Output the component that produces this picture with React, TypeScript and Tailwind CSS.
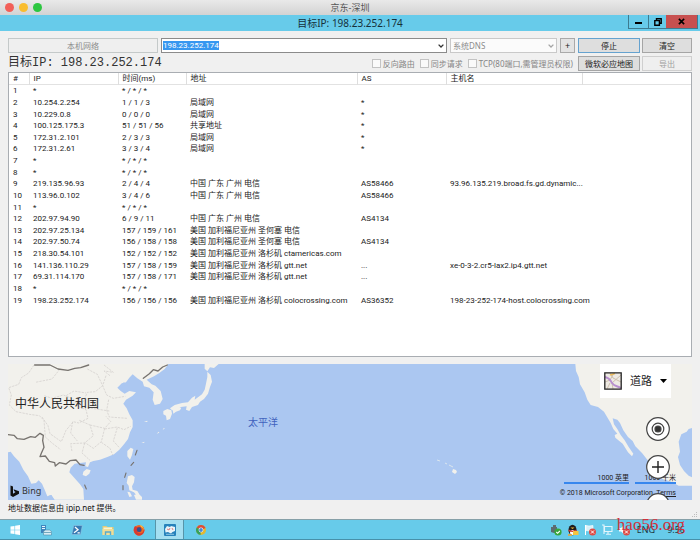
import type { ReactNode } from 'react';

type Hop = { ip: string; time: string; addr?: string; as?: string; host?: string };

const hops: Hop[] = [
  { ip: '*', time: '* / * / *' },
  { ip: '10.254.2.254', time: '1 / 1 / 3', addr: '局域网', as: '*' },
  { ip: '10.229.0.8', time: '0 / 0 / 0', addr: '局域网', as: '*' },
  { ip: '100.125.175.3', time: '51 / 51 / 56', addr: '共享地址', as: '*' },
  { ip: '172.31.2.101', time: '2 / 3 / 3', addr: '局域网', as: '*' },
  { ip: '172.31.2.61', time: '3 / 3 / 4', addr: '局域网', as: '*' },
  { ip: '*', time: '* / * / *' },
  { ip: '*', time: '* / * / *' },
  { ip: '219.135.96.93', time: '2 / 4 / 4', addr: '中国 广东 广州 电信', as: 'AS58466', host: '93.96.135.219.broad.fs.gd.dynamic...' },
  { ip: '113.96.0.102', time: '3 / 4 / 6', addr: '中国 广东 广州 电信', as: 'AS58466' },
  { ip: '*', time: '* / * / *' },
  { ip: '202.97.94.90', time: '6 / 9 / 11', addr: '中国 广东 广州 电信', as: 'AS4134' },
  { ip: '202.97.25.134', time: '157 / 159 / 161', addr: '美国 加利福尼亚州 圣何塞 电信' },
  { ip: '202.97.50.74', time: '156 / 158 / 158', addr: '美国 加利福尼亚州 圣何塞 电信', as: 'AS4134' },
  { ip: '218.30.54.101', time: '152 / 152 / 152', addr: '美国 加利福尼亚州 洛杉矶 ctamericas.com' },
  { ip: '141.136.110.29', time: '157 / 158 / 159', addr: '美国 加利福尼亚州 洛杉矶 gtt.net', as: '...', host: 'xe-0-3-2.cr5-lax2.ip4.gtt.net' },
  { ip: '69.31.114.170', time: '157 / 158 / 171', addr: '美国 加利福尼亚州 洛杉矶 gtt.net', as: '...' },
  { ip: '*', time: '* / * / *' },
  { ip: '198.23.252.174', time: '156 / 156 / 156', addr: '美国 加利福尼亚州 洛杉矶 colocrossing.com', as: 'AS36352', host: '198-23-252-174-host.colocrossing.com' },
];

const columns = ['#', 'IP', '时间(ms)', '地址', 'AS', '主机名'];

function TitleBars() {
  return (
    <header>
      <div className="relative flex h-[15px] items-center justify-center bg-linear-to-b from-[#e9e9e9] to-[#d3d3d3] text-[9px] text-[#555]">
        <div className="absolute left-[5px] flex gap-[5px]">
          <span className="size-[9px] rounded-full bg-[#f25f58]" />
          <span className="size-[9px] rounded-full bg-[#f9bd2f]" />
          <span className="size-[9px] rounded-full bg-[#2dc640]" />
        </div>
        京东-深圳
      </div>
      <div className="relative flex h-4 items-center justify-center bg-[#67cbea] text-[10px] text-[#16303a]">
        目标IP: 198.23.252.174
        <div className="absolute top-0 right-[2px] flex h-[14px] border border-t-0 border-[#3d7b90]">
          <button aria-label="最小化" className="flex w-[19px] items-end justify-center pb-1">
            <span className="h-[2px] w-[7px] bg-black" />
          </button>
          <button aria-label="还原" className="flex w-[18px] items-center justify-center border-l border-[#3d7b90]">
            <svg viewBox="0 0 8 8" className="size-2" fill="none" stroke="#000" strokeWidth="1.4">
              <path d="M2.5 2V.8h4.7v4.4H6M.8 2.6h4.6v4.6H.8z" />
            </svg>
          </button>
          <button aria-label="关闭" className="flex w-[31px] items-center justify-center bg-[#c75050]">
            <svg viewBox="0 0 8 8" className="size-[7px]" stroke="#000" strokeWidth="1.9">
              <path d="M1 1l6 6M7 1L1 7" />
            </svg>
          </button>
        </div>
      </div>
    </header>
  );
}

function Chevron({ className }: { className: string }) {
  return (
    <svg viewBox="0 0 6 4" className={className} fill="none" strokeWidth="1.3">
      <path d="M.6.6L3 3 5.400.6" />
    </svg>
  );
}

function Check({ children }: { children: ReactNode }) {
  return (
    <label className="flex items-center gap-[2px] whitespace-nowrap text-[#858585]">
      <input type="checkbox" className="size-[9px] appearance-none border border-[#c3c3c3] bg-[#fafafa]" />
      {children}
    </label>
  );
}

function Toolbar() {
  return (
    <div className="text-[8px]">
      <div className="flex h-[15px] gap-[3px]">
        <button disabled className="w-[150px] border border-[#c4c9c9] bg-[#efefef] text-[#8c8c8c]">本机网络</button>
        <div className="flex flex-1 items-center justify-between border border-[#8b8b8b] bg-white pr-[2px] pl-px">
          <input aria-label="目标IP" defaultValue="198.23.252.174" className="h-[9px] w-[56px] bg-[#3797f0] font-[Roboto,sans-serif] leading-[9px] text-white outline-none" />
          <button aria-label="历史">
            <Chevron className="h-1 w-[6px] stroke-[#333]" />
          </button>
        </div>
        <div className="relative w-[107px]">
          <select disabled aria-label="DNS" className="h-full w-full appearance-none border border-[#c9c9c9] bg-[#fbfbfb] px-[2px] text-[#8c8c8c] opacity-100">
            <option>系统DNS</option>
          </select>
          <Chevron className="pointer-events-none absolute top-[6px] right-[3px] h-1 w-[6px] stroke-[#a5a5a5]" />
        </div>
        <button aria-label="添加" className="flex w-[15px] items-center justify-center border border-[#a9a9a9] bg-[#e3e3e3] text-[9px] leading-none">+</button>
        <div className="flex gap-[2px]">
          <button className="w-[62px] border border-[#65a2cf] bg-[#dedede]">停止</button>
          <button className="w-[50px] border border-[#a5a5a5] bg-[#dedede]">清空</button>
        </div>
      </div>
      <div className="mt-[3px] flex h-[15px] items-center gap-[5px]">
        <h1 className="mr-auto font-['Liberation_Mono','Noto_Sans_CJK_SC',monospace] text-[12px] leading-[15px] whitespace-pre text-[#333]">目标IP: 198.23.252.174</h1>
        <Check>反向路由</Check>
        <Check>同步请求</Check>
        <Check>TCP(80端口,需管理员权限)</Check>
        <div className="flex h-full gap-[2px]">
          <button className="w-[62px] border border-[#a5a5a5] bg-[#dedede]">微软必应地图</button>
          <button disabled className="w-[50px] border border-[#cfcfcf] bg-[#efefef] text-[#a0a0a0]">导出</button>
        </div>
      </div>
    </div>
  );
}

function HopTable() {
  return (
    <div className="mt-px flex-1 border border-[#a9adb2] bg-white">
      <table className="h-[233px] w-full table-fixed border-collapse text-left font-['Roboto','Noto_Sans_CJK_SC',sans-serif] text-[8px] leading-[11px] whitespace-nowrap text-[#222]">
        <colgroup>
          <col className="w-[20px]" />
          <col className="w-[89px]" />
          <col className="w-[68px]" />
          <col className="w-[171px]" />
          <col className="w-[89px]" />
          <col className="w-[136px]" />
          <col />
        </colgroup>
        <thead>
          <tr className="border-b border-[#e2e2e2]">
            {columns.map((c) => (
              <th key={c} className="border-r border-[#dedede] px-1 py-0 font-normal">{c}</th>
            ))}
            <th aria-label="空" />
          </tr>
        </thead>
        <tbody>
          {hops.map((h, i) => (
            <tr key={i}>
              <td className="px-1 py-0">{i + 1}</td>
              <td className="px-1 py-0">{h.ip}</td>
              <td className="px-1 py-0">{h.time}</td>
              <td className="px-1 py-0">{h.addr}</td>
              <td className="px-1 py-0">{h.as}</td>
              <td className="px-1 py-0">{h.host}</td>
              <td />
            </tr>
          ))}
        </tbody>
      </table>
    </div>
  );
}

function MapShapes() {
  return (
    <svg viewBox="0 0 684 136" preserveAspectRatio="xMidYMid slice" className="absolute inset-0 h-full w-full">
      {/* east asia */}
      <g transform="translate(-8 -9) scale(.33333)">
        <g fill="#f2f1ec">
          <path d="M24 27H505L494 42 478 54 462 64 440 74 455 88 466 92 482 108 488 132 480 146 464 150 458 134 461 112 448 98 432 94 428 80 412 70 398 58 388 68 378 82 364 86 352 98 362 108 374 116 388 108 408 112 398 122 378 134 370 146 380 160 388 178 398 196 398 216 390 232 384 252 372 268 358 284 342 298 322 306 300 314 280 318 270 322 264 336 256 334 258 322 240 324 224 326 212 338 208 352 224 370 240 388 250 402 252 434H164L154 420 142 424 134 404 126 386 116 376 108 384 94 386 84 364 70 344 58 320 42 304 32 290 24 292z" />
          <path d="M250 350l10-8 12 4-4 10-10 8-10-4zM382 288l10-10 8 4-4 18-6 14-8-10zM384 364l12-4 8 6-2 16-6 12 2 10 14 4 6 10-6 6-10-12-14-6-2-14-6-8zM382 410l8 2 6 12-8 2zM402 420l14-4 10 10v8h-18z" />
          <path d="M614 27h42l-14 12-12-2-8 12-8-8zM622 50l10 10 4 20-6 16-6 20-12 16-12 8-6 10-18 6-8 12-10-4 2-10-18 2-14 6-12 4-6-6 14-10 22-6 18-2 12-14 10-6-2 12 22-16 8-14 4-18 4-20zM490 168l12-6 12 4 2 10-6 16-10 4-2-14-8-4zM518 164l12-8 14 2-4 8-12 4-8 6z" />
          <path d="M424 264l10-4-2 4zM470 236l6-6 2 3zM488 224l4-6 2 3zM432 200l10-3v4z" />
        </g>
        <path d="M84 384l6 6-4 5zM146 422l8-2 6 12h-14zM362 88l10-6 6 4-6 8z" fill="#abc7f1" />
        <g fill="none" stroke="#d4d1ce" strokeWidth="2.400" strokeDasharray="7 3">
          <path d="M102 30l-16 24-22 14-8 20-30 10 8 22-6 30 20 20 40 8 30 4 14 14 4 50 20 18 26 20M126 186l18 26 6 24 34 24 14-34 22-26 16 4 28-14-6-26-24-10-14-22-30-12-34 10-24-8M262 42l30 16 16 34-22 18-24 2-12 28-34 6-18-24 24-14 36 6M312 30l28 22-28-4 18 14M318 62l-10 30 12 28 20 10 36-6M326 134l-6 32 8 20 54 4M262 158l66 10M238 196l32 14 10 32-26 22-42 2 4 24M270 210l44 10 18-20-14-16M314 220l-10 40-24 20-26-18M314 222l38-6 20 8 20-10M352 218l-12 40 20 22M304 262l26 18 8 20M254 264l-8 30 24 22M218 200l-6 34 20 24M180 42l-24 30-50 10" />
        </g>
        <g fill="none" stroke="#77736f" strokeWidth="4" strokeLinejoin="round" strokeLinecap="round">
          <path d="M104 30h46l24 12 30 4 20-6 18-2 24-8M430 70l18-14 12-12 14 4 14-12 14-6" />
          <path d="M24 239l18 2 10 10 20 2 20-8 14 2 14-12 10 6-2 16 4 20-8 18-4 10 16-2 12 16 16 4 2 10 12-10 20 4 12-10 18-2 12 14 12 2" />
          <path d="M411 286l-5 14M401 322l-8 9M378 354l-4 13M369 392v12M254 390l5 12" strokeWidth="3.400" />
        </g>
      </g>
      {/* hawaii */}
      <path d="M429 96l3 1M437 99l2 1M441 101l4 2" stroke="#dbe6ee" strokeWidth="1" />
      <path d="M445 105l3 1 1 2-2 2-3-2z" fill="#f2f1ec" />
      {/* north america */}
      <g transform="translate(452 -9) scale(.33333)">
        <path fill="#f2f1ec" d="M346 27H698V218L686 222 680 230 664 238 656 260 660 290 654 306 660 330 672 348 686 362 698 368V392H656L634 380 608 372 588 358 574 336 562 314 546 294 526 274 518 258 504 246 490 226 480 204 472 194 458 190 462 208 472 222 482 240 494 256 506 276 520 296 516 304 504 292 488 266 466 248 464 240 472 236 460 222 452 204 440 184 432 170 414 156 392 150 382 134 374 112 360 88 356 66 348 48z" />
      </g>
    </svg>
  );
}

function MapView() {
  return (
    <section className="relative mt-[7px] h-[136px] overflow-hidden bg-[#abc7f1]">
      <MapShapes />
      <span className="absolute top-8 left-[7px] text-[12px] leading-4 text-[#222]">中华人民共和国</span>
      <span className="absolute top-[50px] left-[240px] text-[10px] leading-4 text-[#3f62bd]">太平洋</span>
      <div className="absolute bottom-[2px] left-[2px] flex items-center gap-[3px] text-[9px] leading-[14px] text-[#333]">
        <svg viewBox="0 0 9 12" className="h-3 w-[9px]">
          <path d="M.5.5L3 1.400v7.300L5.600 7 4.300 6.300 3.500 4.200 9 6.200v2.500L3 12 .5 10.500z" fill="#111" />
        </svg>
        Bing
      </div>
      <button className="absolute top-0 right-[21px] flex h-[34px] w-[71px] items-center justify-between bg-white pr-1 pl-1 text-[11px] text-[#222]">
        <svg viewBox="0 0 18 18" className="size-[18px]" fill="none">
          <path d="M.8.8h16.400v16.400H.8z" fill="#eeeae4" />
          <path d="M1 10l5-2 4-7M9 17l-1-6 9-8M6 1l3 5 8 4M3 17l3-6" stroke="#cdbfae" strokeWidth="1" />
          <path d="M6 3l5-1.500" stroke="#efbd5b" strokeWidth="1.400" />
          <path d="M1 5c5 1 5 3 7 6s5 3 9 5" stroke="#b78fcf" strokeWidth="1.900" />
          <path d="M.8.8h16.400v16.400H.8z" stroke="#222" strokeWidth="1.300" />
        </svg>
        道路
        <svg viewBox="0 0 7 4" className="h-1 w-[7px]">
          <path d="M0 0h7L3.500 4z" fill="#000" />
        </svg>
      </button>
      <div className="absolute right-[16px] bottom-[3px] flex flex-col items-end font-['Roboto','Noto_Sans_CJK_SC',sans-serif] text-[7px] leading-[8px] text-[#222]">
        <div className="flex gap-[6px] text-right">
          <span className="w-[65px] border-b-2 border-[#3787ee]">1000 英里</span>
          <span className="w-[41px] border-b-2 border-[#3787ee]">1000 千米</span>
        </div>
        <p className="mt-[5px] whitespace-nowrap">
          © 2018 Microsoft Corporation&nbsp; <a href="#terms" className="underline">Terms</a>
        </p>
      </div>
      <div className="absolute top-[53px] right-[22px] flex flex-col gap-[14px]">
        <button aria-label="定位">
          <svg viewBox="0 0 24 24" className="size-6" fill="#fff" stroke="#444" strokeWidth="1.200">
            <circle cx="12" cy="12" r="11.300" />
            <circle cx="12" cy="12" r="5.800" />
            <circle cx="12" cy="12" r="3" fill="#333" />
          </svg>
        </button>
        <button aria-label="放大">
          <svg viewBox="0 0 24 24" className="size-6" fill="#fff" stroke="#444" strokeWidth="1.200">
            <circle cx="12" cy="12" r="11.300" />
            <path d="M12 6v12M6 12h12" stroke="#222" strokeWidth="1.400" />
          </svg>
        </button>
        <button aria-label="缩小">
          <svg viewBox="0 0 24 24" className="size-6" fill="#fff" stroke="#444" strokeWidth="1.200">
            <circle cx="12" cy="12" r="11.300" />
            <path d="M6 12h12" />
          </svg>
        </button>
      </div>
    </section>
  );
}

function TaskButton({ label, active, children }: { label: string; active?: boolean; children: ReactNode }) {
  return (
    <button
      aria-label={label}
      className={active ? 'flex w-[29px] items-center justify-center border-x border-[#5795a9] bg-[#a4dff1]' : 'flex w-[29px] items-center justify-center'}
    >
      <svg viewBox="0 0 12 12" className="size-3">{children}</svg>
    </button>
  );
}

function TrayIcon({ children }: { children: ReactNode }) {
  return <svg viewBox="0 0 12 12" className="size-3">{children}</svg>;
}

function ErrorBadge() {
  return (
    <>
      <circle cx="8.500" cy="8" r="3.500" fill="#dd4b45" />
      <path d="M7 6.500l3 3M10 6.500l-3 3" stroke="#fff" strokeWidth="1" />
    </>
  );
}

function Taskbar() {
  return (
    <footer className="relative flex h-[21px] justify-between border-t border-b border-t-[#86a0a8] border-b-[#4791aa] bg-[#67cbea]">
      <nav className="flex gap-[2px]">
        <TaskButton label="开始">
          <path d="M1.500 2.500l4-.6v3.800h-4zM6.100 1.800l4.900-.7v4.600H6.100zM1.500 6.300h4v3.800l-4-.6zM6.100 6.300H11v4.600l-4.900-.7z" fill="#fff" />
        </TaskButton>
        <TaskButton label="服务器管理器">
          <path d="M1 1h5v8H1z" fill="#3f86bd" />
          <path d="M2 2.500h3M2 4.500h3" stroke="#e6f6ff" />
          <path d="M3.500 7.500l2-1.500h4l2 1.500v3.500h-8z" fill="#d8edf5" stroke="#498ba8" strokeWidth=".6" />
          <path d="M4 8.500h7" stroke="#498ba8" strokeWidth=".7" />
        </TaskButton>
        <TaskButton label="PowerShell">
          <path d="M2.800 1.500h8.500L9.500 10.500H.8z" fill="#367ab3" stroke="#9ccae4" strokeWidth=".5" />
          <path d="M4 3l3 2.800L3 8.800M6.500 8.800h2.300" stroke="#fff" fill="none" strokeWidth="1.300" />
        </TaskButton>
        <TaskButton label="文件资源管理器">
          <path d="M.5 2h4l1 1h6v8H.5z" fill="#e3cb79" />
          <path d="M1.500 3.500H10V7H1.500z" fill="#f9f4cf" />
          <path d="M.5 5h11v6H.5z" fill="#f1dd96" />
          <path d="M3.500 11V8h5v3" fill="none" stroke="#59aacb" strokeWidth="1.400" />
        </TaskButton>
        <TaskButton label="Firefox">
          <circle cx="6" cy="6.300" r="5.400" fill="#ef6b22" />
          <path d="M2 2l2 1.200c3-1 4 .3 4 .3L7 5l1.500 1.200c0 2-2.500 3-4.500 1.300.5 2 4.500 2.500 6 .2 1-2 .2-4.500-1.500-6C13 4 12 10.500 7 11.500 2 12 .2 7 1 4z" fill="#d83b32" />
          <circle cx="6.200" cy="5.700" r="2.400" fill="#394e8e" />
          <path d="M7 .8c2 1 4.500 3 4 6-.2-2-1.500-3.300-3-3.800z" fill="#ffc13a" />
        </TaskButton>
        <TaskButton label="路由跟踪" active>
          <rect width="12" height="12" rx="1" fill="#2782bb" />
          <path d="M1 5l2-3 3 1 1-1 4 1v4L8.500 8 7 9.500 4 8 1.500 8.500z" fill="#eaf4f8" />
          <path d="M3 5l2 1 1-2M8 4l1 2" stroke="#d85e62" strokeWidth=".8" fill="none" />
          <path d="M2 10.300h8" stroke="#a8d8ed" strokeWidth=".8" />
        </TaskButton>
        <TaskButton label="Chrome">
          <circle cx="6" cy="6" r="5" fill="#e3b832" />
          <path d="M6 6L1.700 3.500A5 5 0 0 1 10.600 4z" fill="#d94c3d" />
          <path d="M6 6L1.700 3.500A5 5 0 0 0 5.500 11z" fill="#36a15b" />
          <circle cx="6" cy="6" r="2.400" fill="#fff" />
          <circle cx="6" cy="6" r="1.900" fill="#4688dc" />
        </TaskButton>
      </nav>
      <div className="flex items-center gap-[5px] pr-[15px] text-[9px] text-[#1b3741]">
        <TrayIcon>
          <path d="M1 3h2V1h3v2h1v6H4L1 8z" fill="#5d6c70" />
          <circle cx="8" cy="8" r="3.600" fill="#36a63d" />
          <path d="M6.300 8l1.300 1.300L9.800 7" stroke="#fff" fill="none" strokeWidth="1.100" />
        </TrayIcon>
        <TrayIcon>
          <ellipse cx="5.500" cy="6" rx="4" ry="5.300" fill="#1d1d1d" />
          <ellipse cx="5.500" cy="8.500" rx="2.500" ry="2.500" fill="#fff" />
          <path d="M3.500 3.600h4L5.500 5z" fill="#f4bc35" />
          <path d="M1.500 5.500c3 1.500 5 1.500 8 0v1.700c-3 1-5 1-8 0z" fill="#d63b2b" />
          <path d="M6 7h5.500v4H6z" fill="#f6c440" />
          <path d="M1 11h4" stroke="#f2a52c" strokeWidth="1.500" />
        </TrayIcon>
        <TrayIcon>
          <path d="M1.500 1v10" stroke="#fff" />
          <path d="M2 1.500l3 .5 4-.5v5L5 7l-3-.5z" fill="#d7f0f8" stroke="#fff" strokeWidth=".6" />
          <ErrorBadge />
        </TrayIcon>
        <TrayIcon>
          <path d="M3.500 2.500h7.500v5H3.500zM7 7.500V10M5 10.300h5M1 1h2v9" fill="none" stroke="#e2f5fb" strokeWidth="1.100" />
        </TrayIcon>
        <TrayIcon>
          <path d="M1 4h2l3-3v9L3 7.500H1z" fill="#f4fbfd" />
          <ErrorBadge />
        </TrayIcon>
        <span className="ml-[2px]">ENG</span>
        <time className="ml-[7px]">9:56</time>
      </div>
      <span className="absolute right-[15px] bottom-0 font-['Liberation_Serif',serif] text-[17px] leading-[28px] text-[#d0333c]">hao56.org</span>
    </footer>
  );
}

export default function App() {
  return (
    <div className="flex min-h-screen flex-col bg-[#f0f0f0] font-['Noto_Sans','Noto_Sans_CJK_SC',sans-serif] text-[#222]">
      <TitleBars />
      <main className="flex flex-1 flex-col px-2 pt-[7px]">
        <Toolbar />
        <HopTable />
        <MapView />
        <div className="flex h-[19px] justify-between pt-[2px] text-[8px] leading-3 text-[#111]">
          <p>地址数据信息由 ipip.net 提供。</p>
          <svg viewBox="0 0 7 7" className="-mr-[6px] size-[7px] self-end" fill="#bdbdbd">
            <path d="M5 0h1v1H5zM5 2h1v1H5zM5 4h1v1H5zM3 2h1v1H3zM3 4h1v1H3zM1 4h1v1H1z" />
          </svg>
        </div>
      </main>
      <Taskbar />
    </div>
  );
}
